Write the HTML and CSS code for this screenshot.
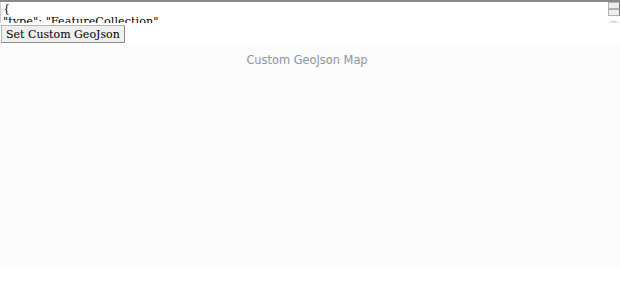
FILE: index.html
```html
<!DOCTYPE html>
<html>
<head>
<meta charset="utf-8">
<link rel="stylesheet" href="styles.css">
</head>
<body>
<div class="input-wrap">
<textarea class="geo-input" rows="2">{
"type": "FeatureCollection",
"features": []
}</textarea>
<div class="scrollbar"><div class="sb-btn"></div><div class="sb-btn"></div><div class="sb-track"></div><div class="grip"></div></div>
</div>
<div class="controls"><button class="set-btn">Set Custom GeoJson</button></div>
<div class="chart">
  <div class="chart-title">Custom GeoJson Map</div>
</div>
</body>
</html>
```
FILE: styles.css
```css
html, body {
  margin: 0;
  padding: 0;
  background: #ffffff;
}
.input-wrap {
  display: flex;
  height: 23px;
  border-top: 2px solid #8a8a8a;
  box-sizing: border-box;
  border-bottom: 1px solid #eeeeee;
}
.geo-input {
  flex: 1;
  display: block;
  box-sizing: border-box;
  height: 21px;
  margin: 0;
  padding: 0 2px;
  font-family: "DejaVu Serif", serif;
  font-size: 11.3px;
  line-height: 13px;
  border: none;
  border-left: 1px solid #cfcfcf;
  overflow: hidden;
  resize: none;
  color: #000;
  background: #fff;
  outline: none;
}
.scrollbar {
  width: 12px;
  display: flex;
  flex-direction: column;
  background: #fff;
}
.sb-btn {
  height: 5px;
  border: 1px solid #b0b0b0;
  border-right-color: #777;
  background: #eeeeee;
}
.sb-track {
  flex: 1;
}
.grip {
  height: 4px;
  margin: 0 1px 0 5px;
  border-bottom: 1px solid #d0d0d0;
  transform: skewX(-45deg);
}
.controls {
  display: flex;
  height: 21px;
  align-items: flex-start;
  padding-top: 2px;
  box-sizing: border-box;
}
.set-btn {
  font-family: "DejaVu Serif", serif;
  font-size: 11px;
  padding: 0 4px;
  margin: 0 0 0 1px;
  height: 18px;
  line-height: 15px;
  border: 1px solid #b5b5b5;
  border-right-color: #8a8a8a;
  border-bottom-color: #8a8a8a;
  background: #efefef;
  color: #000;
}
.chart {
  height: 222px;
  background: #fcfcfc;
  display: flex;
  flex-direction: column;
  align-items: center;
  padding-right: 6px;
}
.chart-title {
  margin-top: 9px;
  font-family: "DejaVu Sans", sans-serif;
  font-size: 11.4px;
  color: #8c96a3;
}
```
